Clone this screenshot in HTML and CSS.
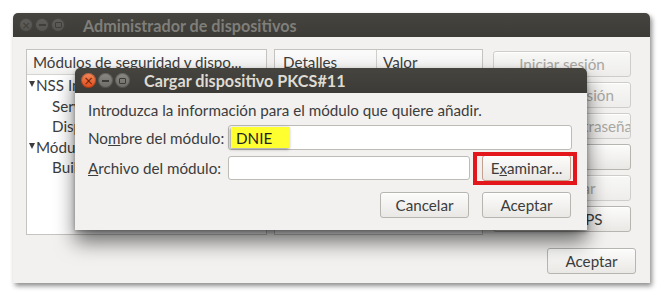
FILE: index.html
```html
<!DOCTYPE html>
<html lang="es">

<head>
    <meta charset="UTF-8">
    <meta name="viewport" content="width=device-width, initial-scale=1.0">
    <title>Administrador de dispositivos</title>

    <link rel="stylesheet" href="styles.css">
</head>

<body>
    <!-- Ventana principal -->
    <section class="window mainWindow">
        <header class="titlebar">
            <div class="winButtons">
                <span class="winBtn inactive">&times;</span>
                <span class="winBtn inactive"><i class="minGlyph"></i></span>
                <span class="winBtn inactive"><i class="maxGlyph"></i></span>
            </div>
            <h1 class="title inactiveTitle">Administrador de dispositivos</h1>
        </header>

        <div class="mainBody">
            <div class="mainRow">
                <div class="panel treePanel">
                    <div class="panelHeader">
                        <span class="headCell">Módulos de seguridad y dispo...</span>
                    </div>
                    <ul class="tree">
                        <li class="treeRow"><span class="expander"></span>NSS Internal PKCS #11 Module</li>
                        <li class="treeRow child">Servicios criptográficos genéricos</li>
                        <li class="treeRow child">Dispositivo software de seguridad</li>
                        <li class="treeRow"><span class="expander"></span>Módulo de confianza raíz integrado</li>
                        <li class="treeRow child">Builtin Object Token</li>
                    </ul>
                </div>

                <div class="panel detailPanel">
                    <div class="panelHeader">
                        <span class="headCell detailCol">Detalles</span>
                        <span class="headCell">Valor</span>
                    </div>
                </div>

                <div class="sideButtons">
                    <button class="btn" disabled>Iniciar sesión</button>
                    <button class="btn" disabled>Terminar sesión</button>
                    <button class="btn" disabled>Cambiar contraseña</button>
                    <button class="btn">Cargar</button>
                    <button class="btn" disabled>Descargar</button>
                    <button class="btn">Activar FIPS</button>
                </div>
            </div>

            <div class="bottomRow">
                <button class="btn okBtn">Aceptar</button>
            </div>
        </div>
    </section>

    <!-- Dialogo: cargar dispositivo -->
    <section class="window dialog">
        <header class="titlebar dialogBar">
            <div class="winButtons">
                <span class="winBtn close">&times;</span>
                <span class="winBtn"><i class="minGlyph"></i></span>
                <span class="winBtn"><i class="maxGlyph"></i></span>
            </div>
            <h1 class="title">Cargar dispositivo PKCS#11</h1>
        </header>

        <form class="dialogBody">
            <p class="intro">Introduzca la información para el módulo que quiere añadir.</p>

            <div class="fields">
                <label for="modName">No<u>m</u>bre del módulo:</label>
                <div class="entry nameEntry">
                    <input type="text" id="modName" value="">
                    <span class="highlight">DNIE</span>
                </div>

                <label for="modFile"><u>A</u>rchivo del módulo:</label>
                <div class="fileRow">
                    <div class="entry fileEntry">
                        <input type="text" id="modFile" value="">
                    </div>
                    <div class="browseWrap">
                        <button type="button" class="btn browseBtn">E<u>x</u>aminar...</button>
                        <span class="redFrame"></span>
                    </div>
                </div>
            </div>

            <div class="dialogActions">
                <button type="button" class="btn">Cancelar</button>
                <button type="submit" class="btn">Aceptar</button>
            </div>
        </form>
    </section>
</body>

</html>
```

FILE: styles.css
```css
body {
    margin: 0;
    width: 663px;
    height: 296px;
    background-color: white;
    font-family: "Lato", "Liberation Sans", sans-serif;
    font-size: 15.2px;
    color: #3c3c3c;
    overflow: hidden;
}

/* windows on the desktop */
.window {
    position: absolute;
    display: flex;
    flex-direction: column;
    background-color: #f2f1f0;
    border-radius: 5px 5px 0 0;
    overflow: hidden;
}

.mainWindow {
    left: 13px;
    top: 13px;
    width: 637px;
    height: 270px;
    box-shadow: 2px 3px 5px rgba(0, 0, 0, 0.45);
}

.dialog {
    left: 75px;
    top: 68px;
    width: 512px;
    height: 162px;
    box-shadow: 0 12px 20px rgba(0, 0, 0, 0.55), 0 2px 4px rgba(0, 0, 0, 0.3);
}

.titlebar {
    display: flex;
    align-items: center;
    height: 24px;
    flex-shrink: 0;
    background: linear-gradient(#45443f, #3c3b37);
}

.dialogBar {
    height: 25px;
}

.winButtons {
    display: flex;
    gap: 2px;
    margin-left: 6px;
    width: 52px;
}

.winBtn {
    display: flex;
    align-items: center;
    justify-content: center;
    width: 15px;
    height: 15px;
    border-radius: 50%;
    background: linear-gradient(#8a8984, #6c6b66);
    box-shadow: inset 0 0 0 1px rgba(0, 0, 0, 0.25);
    color: #3c3b37;
    font-family: "DejaVu Sans", sans-serif;
    font-size: 12px;
    line-height: 1;
}

.winBtn.inactive {
    width: 14px;
    height: 14px;
    background: linear-gradient(#5f5e5a, #54534f);
    color: #3f3e3a;
    font-size: 11px;
}

.winBtn.close {
    background: linear-gradient(#f48a5c, #df4a19);
    color: #6b2208;
}

.minGlyph {
    width: 7px;
    height: 2px;
    background-color: currentColor;
}

.maxGlyph {
    width: 5px;
    height: 4px;
    border: 1.5px solid currentColor;
    border-radius: 1px;
}

.title {
    margin: 0 0 0 11px;
    font-size: 16.2px;
    font-weight: bold;
    color: #dfdbd2;
    white-space: nowrap;
}

.inactiveTitle {
    margin-left: 12px;
    color: #7f7e79;
}

/* main window body */
.mainBody {
    display: flex;
    flex-direction: column;
    padding: 12px 14px 10px 13px;
    gap: 13px;
}

.mainRow {
    display: flex;
    height: 186px;
}

.panel {
    background-color: white;
    border: 1px solid #c5c3bf;
    box-sizing: border-box;
    overflow: hidden;
}

.treePanel {
    width: 241px;
    margin-right: 7px;
}

.detailPanel {
    width: 209px;
    margin-right: 10px;
}

.panelHeader {
    display: flex;
    height: 24px;
    border-bottom: 1px solid #d6d4d0;
    background: linear-gradient(#fbfbfb, #f1f1f0);
}

.headCell {
    display: flex;
    align-items: center;
    padding-left: 6px;
    white-space: nowrap;
}

.detailCol {
    width: 102px;
    border-right: 1px solid #d0ceca;
    padding-left: 8px;
    box-sizing: border-box;
}

.tree {
    list-style: none;
    margin: 0;
    padding: 0;
}

.treeRow {
    display: flex;
    align-items: center;
    height: 20.5px;
    padding-left: 2px;
    white-space: nowrap;
}

.treeRow.child {
    padding-left: 25px;
}

.expander {
    width: 0;
    height: 0;
    margin: 0 1px 2px 0;
    border-left: 3.5px solid transparent;
    border-right: 3.5px solid transparent;
    border-top: 6px solid #3c3c3c;
}

.sideButtons {
    display: flex;
    flex-direction: column;
    gap: 5px;
    width: 138px;
    padding-top: 2px;
}

.btn {
    font: inherit;
    height: 26px;
    padding: 0 6px;
    border: 1px solid #b7b5b0;
    border-radius: 3px;
    background: linear-gradient(#fcfcfb, #e9e8e5);
    color: #3c3c3c;
    white-space: nowrap;
    overflow: hidden;
    box-shadow: inset 0 1px 0 white;
}

.btn:disabled {
    color: #a9a7a2;
    border-color: #cfcdc9;
    background: linear-gradient(#f8f8f7, #eeedeb);
}

.bottomRow {
    display: flex;
    justify-content: flex-end;
}

.okBtn {
    width: 89px;
}

/* dialog body */
.dialogBody {
    display: flex;
    flex-direction: column;
    padding: 7px 15px 12px 13px;
    margin: 0;
}

.intro {
    margin: 0 0 5px;
    line-height: 20px;
}

.fields {
    display: grid;
    grid-template-columns: 140px 1fr;
    row-gap: 5px;
    align-items: center;
}

.entry {
    position: relative;
    display: flex;
}

.entry input {
    width: 100%;
    height: 25px;
    box-sizing: border-box;
    border: 1px solid #bdbbb6;
    border-radius: 3px;
    background-color: white;
    font: inherit;
    padding: 0 6px;
}

.fileEntry input {
    height: 24px;
}

.highlight {
    position: absolute;
    left: 3px;
    top: 2px;
    width: 54px;
    height: 21px;
    padding-left: 5px;
    display: flex;
    align-items: center;
    background-color: #ffff30;
    box-shadow: -1px 1px 3px rgba(0, 0, 0, 0.45);
    color: #222;
}

.fileRow {
    display: flex;
    gap: 12px;
    align-items: center;
}

.fileEntry {
    width: 242px;
}

.browseWrap {
    position: relative;
    display: flex;
}

.browseBtn {
    width: 89px;
    border-color: #c4a08e;
}

.redFrame {
    position: absolute;
    left: -9px;
    right: -6px;
    top: -3px;
    bottom: -4px;
    border: 4px solid #e3161c;
}

.dialogActions {
    display: flex;
    justify-content: flex-end;
    gap: 13px;
    margin-top: 11px;
    padding-right: 1px;
}

.dialogActions .btn {
    width: 89px;
}
```
